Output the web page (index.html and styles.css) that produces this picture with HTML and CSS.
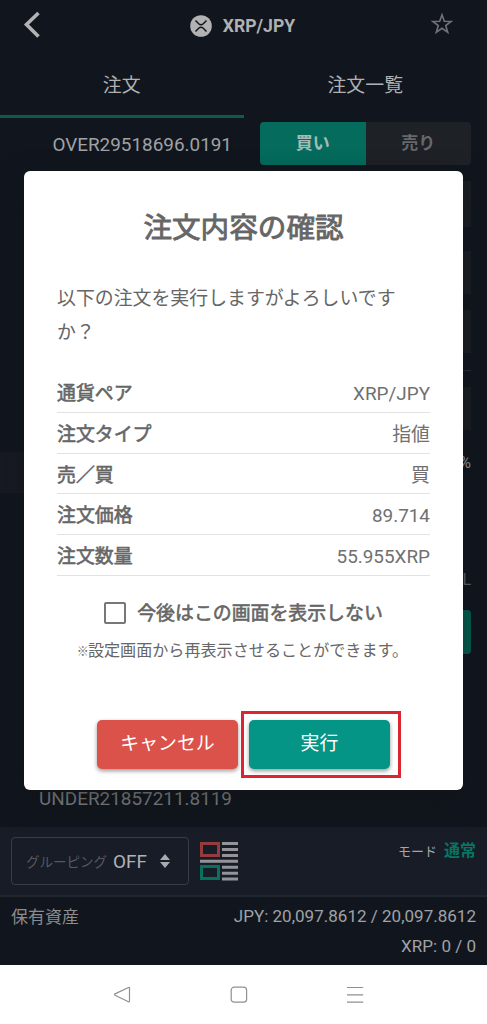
FILE: index.html
```html
<!DOCTYPE html>
<html lang="ja">
<head>
<meta charset="utf-8">
<title>XRP/JPY 注文</title>
<link rel="stylesheet" href="styles.css">
</head>
<body>
<div class="screen">
  <header class="topbar">
    <svg class="back" width="18" height="28" viewBox="0 0 18 28"><path d="M15.5 2 3.5 13.5 15.5 25.5" fill="none" stroke="#b2b3b5" stroke-width="3.6"/></svg>
    <div class="pair">
      <svg width="22" height="22" viewBox="0 0 22 22"><circle cx="11" cy="11" r="10.8" fill="#b2b2b2"/><path d="M5.5 5.5 8.7 8.7Q11 10.7 13.3 8.7L16.5 5.5M5.5 16.5 8.7 13.3Q11 11.3 13.3 13.3L16.5 16.5" fill="none" stroke="#11161e" stroke-width="1.5"/></svg>
      <span>XRP/JPY</span>
    </div>
    <svg class="star" width="24" height="24" viewBox="0 0 24 24"><path d="M12 2.8 14.3 9.2 21.2 9.4 15.7 13.6 17.7 20.2 12 16.3 6.3 20.2 8.3 13.6 2.8 9.4 9.7 9.2Z" fill="none" stroke="#707278" stroke-width="1.6"/></svg>
  </header>
  <nav class="tabs"><div class="tab active">注文</div><div class="tab">注文一覧</div></nav>
  <main class="trade">
    <section class="book">
      <div class="over">OVER29518696.0191</div>
      <div class="current"></div>
      <div class="under">UNDER21857211.8119</div>
    </section>
    <section class="form">
      <div class="sides"><div class="side buy">買い</div><div class="side sell">売り</div></div>
      <div class="field f1"></div>
      <div class="field f2"></div>
      <div class="field f3"></div>
      <div class="rule"></div>
      <div class="field f4"></div>
      <div class="percent">%</div>
      <div class="total">L</div>
      <div class="submit"></div>
    </section>
  </main>
  <section class="tools">
    <div class="select">
      <span class="select-label">グルーピング</span><span class="select-value">OFF</span>
      <svg width="10" height="14" viewBox="0 0 10 14"><path d="M5 0 10 6H0ZM5 14 0 8H10Z" fill="#a9abae"/></svg>
    </div>
    <svg class="book-icon" width="39" height="40" viewBox="0 0 39 40"><g fill="none" stroke-width="3"><path d="M1.5 2.5h17v12h-17z" stroke="#963b3d"/><path d="M1.5 25.5h17v12h-17z" stroke="#08705f"/></g><path d="M22 1h16v3H22zm0 6h16v3H22zm0 6h16v3H22zM0 18.7h38v3H0zM22 24.7h16v3H22zm0 6h16v3H22zm0 5.8h16v3H22z" fill="#929499"/></svg>
    <div class="mode">モード<strong>通常</strong></div>
  </section>
  <section class="assets">
    <span class="assets-label">保有資産</span>
    <div class="balances"><div>JPY: 20,097.8612 / 20,097.8612</div><div>XRP: 0 / 0</div></div>
  </section>
  <nav class="system">
    <svg width="18" height="18" viewBox="0 0 18 18"><path d="M15.5 1.5Q16.5 1 16.5 2.2V15Q16.5 16.2 15.4 15.7L2 9.2Q.9 8.5 2 7.9Z"/></svg>
    <svg width="18" height="18" viewBox="0 0 18 18"><rect x="1.2" y="1.2" width="15.4" height="15" rx="3"/></svg>
    <svg width="18" height="18" viewBox="0 0 18 18"><path d="M1 1.5H17.2M1 8.8H17.2M1 16.2H17.2"/></svg>
  </nav>
  <div class="dialog">
    <h1>注文内容の確認</h1>
    <p class="lead">以下の注文を実行しますがよろしいですか？</p>
    <dl>
      <div class="row"><dt>通貨ペア</dt><dd>XRP/JPY</dd></div>
      <div class="row"><dt>注文タイプ</dt><dd>指値</dd></div>
      <div class="row"><dt>売／買</dt><dd>買</dd></div>
      <div class="row"><dt>注文価格</dt><dd>89.714</dd></div>
      <div class="row"><dt>注文数量</dt><dd>55.955XRP</dd></div>
    </dl>
    <label class="skip"><span class="box"></span>今後はこの画面を表示しない</label>
    <p class="note"><span class="mark">※</span>設定画面から再表示させることができます。</p>
    <div class="actions">
      <div class="btn cancel">キャンセル</div>
      <div class="highlight"><div class="btn ok">実行</div></div>
    </div>
  </div>
</div>
</body>
</html>
```
FILE: styles.css
```css
* { box-sizing: border-box; }
body { margin: 0; font-family: Roboto, "Noto Sans CJK JP", sans-serif; font-size: 18.9px; color: #a0a2a5; }
h1, p, dl, dd { margin: 0; }
svg { display: block; flex: none; }
.screen { position: relative; display: flex; flex-direction: column; width: 487px; height: 1024px; background: #11161e; overflow: hidden; }
.topbar { display: flex; align-items: center; justify-content: space-between; height: 50px; padding: 0 33px 0 23px; }
.back { margin-top: -1px; }
.pair { display: flex; align-items: center; gap: 11px; margin-left: 14px; padding-top: 1px; font-size: 17.6px; font-weight: 700; color: #b0b1b3; }
.star { margin-top: -2px; }
.tabs { display: flex; height: 68px; }
.tab { flex: 1; line-height: 71px; text-align: center; color: #b0b1b3; border-bottom: 3px solid transparent; }
.active { border-color: #0e5a50; }
.trade { display: flex; height: 709px; }
.book { width: 244px; display: flex; flex-direction: column; justify-content: space-between; padding: 14px 12px 15px 0; text-align: right; line-height: 26px; }
.current { align-self: flex-start; width: 232px; height: 41px; margin-top: 1px; background: #171a22; }
.under { color: #86878b; }
.form { width: 243px; padding: 4px 16px; }
.sides { display: flex; height: 43px; border-radius: 4px; overflow: hidden; background: #1e2126; font-weight: 700; font-size: 17px; line-height: 42px; text-align: center; }
.side { flex: 1; color: #66686b; }
.buy { background: #046b5d; color: #a4bbb7; }
.field { height: 43px; background: #1b1f24; }
.f1 { height: 46px; margin-top: 16px; }
.f2 { margin-top: 24px; }
.f3 { margin-top: 16px; }
.rule { height: 1px; margin-top: 17px; background: #2a2e34; }
.f4 { margin-top: 16px; }
.percent, .total { height: 30px; line-height: 30px; text-align: right; font-size: 16px; color: #9c9ea4; }
.percent { margin-top: 18px; }
.total { margin-top: 87px; color: #64666b; }
.submit { height: 44px; margin-top: 15px; border-radius: 4px; background: #045f53; }
.tools { display: flex; align-items: flex-start; height: 70px; padding: 10px 11px 0; background: #181c26; border-bottom: 2px solid #22262e; }
.select { display: flex; align-items: center; width: 178px; height: 48px; padding-left: 14px; border: 1px solid #393c43; border-radius: 4px; }
.select-label { width: 81px; font-size: 13.5px; white-space: nowrap; color: #55585f; }
.select-value { width: 53px; padding-left: 6px; color: #b0b2b5; }
.book-icon { margin: 4px 0 0 11px; }
.mode { margin-left: auto; line-height: 28px; font-size: 13px; color: #a5a6a9; }
.mode strong { margin-left: 7px; font-size: 16px; color: #087465; }
.assets { display: flex; justify-content: space-between; height: 68px; padding: 4px 11px 0; font-size: 17.05px; line-height: 30px; }
.assets-label { padding-top: 1px; font-size: 17px; color: #8a8c90; }
.balances { text-align: right; }
.system { display: flex; justify-content: center; gap: 98.5px; height: 59px; padding-top: 21px; padding-right: 10px; background: #fff; }
.system svg { fill: none; stroke: #909090; stroke-width: 1.2; }
.dialog { position: absolute; left: 24px; top: 171px; width: 439px; height: 619px; padding: 35px 33px 0; border-radius: 6px; background: #fff; color: #666; box-shadow: 0 10px 28px 0 rgba(16, 17, 18, .5); }
h1 { font-size: 28.6px; line-height: 44px; text-align: center; font-weight: 400; -webkit-text-stroke: .9px #666; }
.lead { margin-top: 32px; line-height: 34px; }
dl { margin-top: 22px; }
.row { display: flex; justify-content: space-between; height: 40.8px; padding-top: 2px; line-height: 38px; border-bottom: 1px solid #e2e2e2; }
dt, .skip { -webkit-text-stroke: .6px #666; }
dt { padding-top: 1px; }
dd { color: #707070; padding-top: 1px; }
.skip { display: flex; justify-content: center; align-items: center; gap: 11px; height: 30px; margin-top: 21px; }
.box { width: 22px; height: 22px; margin-top: 2px; border: 2px solid #777; border-radius: 2px; }
.note { margin: 12px 0 0 -2px; font-size: 16.1px; line-height: 24px; white-space: nowrap; text-align: center; }
.mark { font-size: 12px; letter-spacing: -1px; }
.actions { display: flex; align-items: center; gap: 3px; margin: 47px -6px 0 40px; }
.btn { width: 141px; height: 49px; border-radius: 5px; line-height: 48px; text-align: center; color: #fff; box-shadow: 0 2px 4px rgba(0, 0, 0, .4); }
.cancel { background: #da524a; }
.ok { width: 141px; background: #059587; }
.highlight { width: 160px; height: 67px; padding: 6px 5px; border: 3px solid #dc2530; }
```
